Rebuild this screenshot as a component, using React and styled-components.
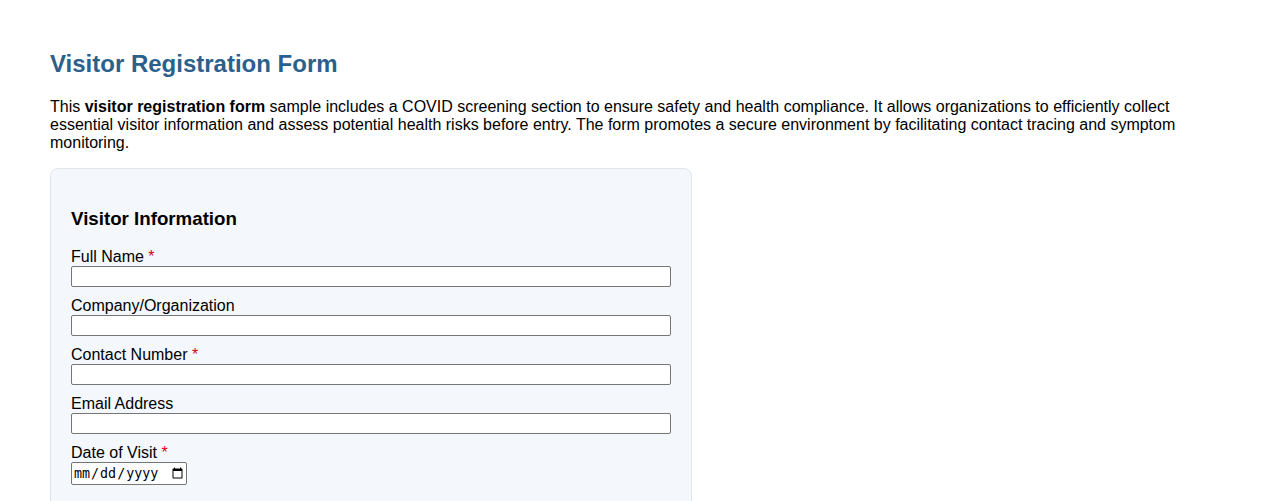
import styled, { createGlobalStyle } from 'styled-components'

const GlobalStyle = createGlobalStyle`
	body {
		margin: 0;
		font-family: "Liberation Sans", Arial, sans-serif;
		background: #fff;
		color: #000;
	}
`

const fields = [
	{ label: 'Full Name', required: true, type: 'text' },
	{ label: 'Company/Organization', type: 'text' },
	{ label: 'Contact Number', required: true, type: 'tel' },
	{ label: 'Email Address', type: 'email' },
	{ label: 'Date of Visit', required: true, type: 'date' },
]

const App = () => (
	<Page>
		<GlobalStyle />
		<Title>Visitor Registration Form</Title>
		<Intro>
			This <Strong>visitor registration form</Strong> sample includes a COVID screening section to ensure safety and health compliance. It allows organizations to efficiently collect essential visitor information and assess potential health risks before entry. The form promotes a secure environment by facilitating contact tracing and symptom monitoring.
		</Intro>
		<Card>
			<SectionTitle>Visitor Information</SectionTitle>
			{fields.map(f => (
				<Field key={f.label}>
					<Label>
						{f.label}
						{f.required && <Required> *</Required>}
					</Label>
					<Input type={f.type} $date={f.type === 'date'} />
				</Field>
			))}
		</Card>
	</Page>
)

const Page = styled.div`
	padding: 30px 50px;
`

const Title = styled.h2`
	font-size: 24px;
	color: #2b5f8c;
	margin: 20px 0;
`

const Intro = styled.p`
	font-size: 16px;
	margin: 0 0 16px;
`

const Strong = styled.b`
	font-weight: bold;
`

const Card = styled.div`
	width: 600px;
	padding: 20px;
	background: #f4f7fb;
	border: 1px solid #e0e6ee;
	border-radius: 8px;
`

const SectionTitle = styled.h3`
	font-size: 18.72px;
	margin: 19px 0 18px;
`

const Field = styled.div`
	margin-bottom: 10px;
`

const Label = styled.label`
	display: block;
	font-size: 16px;
`

const Required = styled.span`
	color: #d0021b;
`

const Input = styled.input`
	display: block;
	box-sizing: border-box;
	width: ${p => (p.$date ? '116px' : '100%')};
	height: ${p => (p.$date ? '23px' : '21px')};
	margin: 0;
	border: 1px solid #767676;
	border-radius: 2px;
	background: #fff;
`

export default App
